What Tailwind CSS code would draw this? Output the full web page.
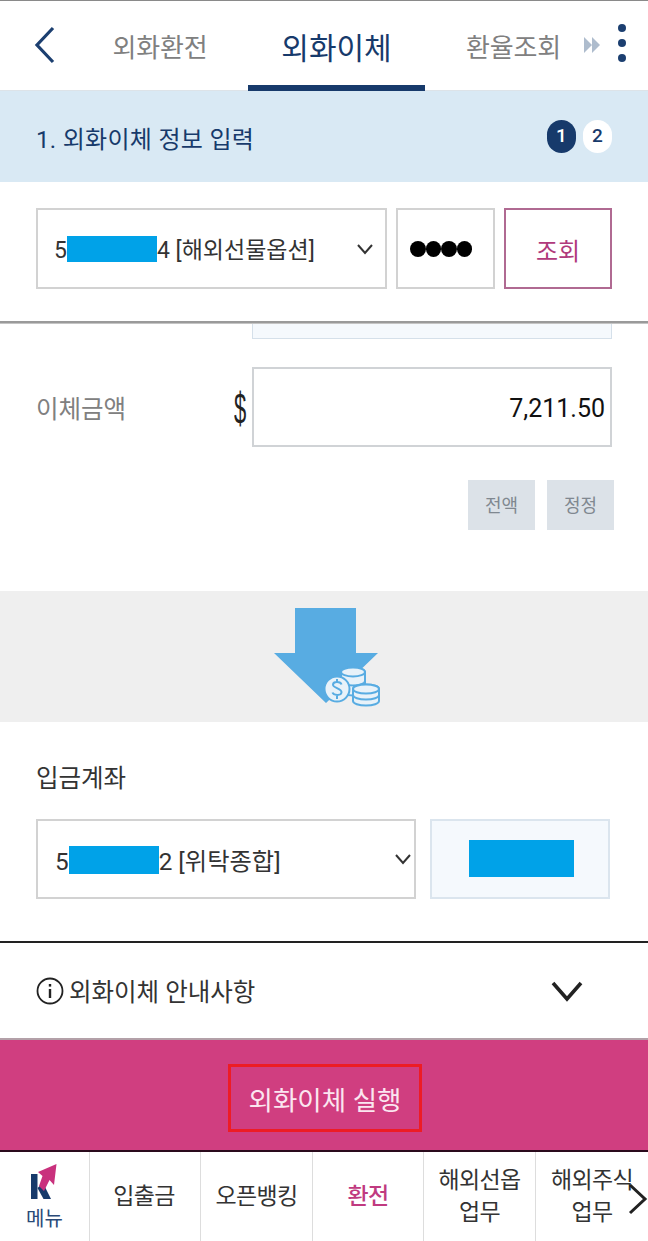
<!DOCTYPE html>
<html lang="ko">
<head>
<meta charset="UTF-8" />
<meta name="viewport" content="width=device-width, initial-scale=1.0" />
<title>외화이체</title>
<script src="https://cdn.jsdelivr.net/npm/@tailwindcss/browser@4"></script>
</head>
<body class="w-[648px] h-[1241px] overflow-hidden bg-white font-['Roboto','Noto_Sans_CJK_KR',sans-serif] text-[#222]">

<!-- Tabs -->
<header class="h-[91px] border-t border-t-[#8a8a8a] border-b border-b-[#dde3e8] flex items-stretch relative">
  <button class="w-[89px] flex items-center pl-[34px] pb-[2px]">
    <svg width="22" height="38" viewBox="0 0 22 38" fill="none" stroke="#1c3f70" stroke-width="3.2"><path d="M19 2 3 19l16 17"/></svg>
  </button>
  <div class="w-[159px] flex items-center justify-center pr-[17px] pt-[6px] text-[26px] text-[#808080] tracking-[-0.2px]">외화환전</div>
  <div class="w-[177px] flex items-center justify-center text-[30px] text-[#173a6b] border-b-[6px] border-b-[#173a6b] pt-[11px] -mb-[1px]">외화이체</div>
  <div class="flex-1 flex items-center pl-[41px] pt-[6px] text-[26px] text-[#808080] tracking-[-0.2px]">환율조회</div>
  <svg class="absolute left-[584px] top-[36px]" width="16" height="16" viewBox="0 0 16 16" fill="#aebccd"><path d="M0 0l8 8-8 8zM8 0l8 8-8 8z"/></svg>
  <div class="absolute left-[618px] top-[23px] flex flex-col gap-[7px]">
    <span class="block w-[8px] h-[8px] rounded-full bg-[#1c3f70]"></span>
    <span class="block w-[8px] h-[8px] rounded-full bg-[#1c3f70]"></span>
    <span class="block w-[8px] h-[8px] rounded-full bg-[#1c3f70]"></span>
  </div>
</header>

<!-- Step title -->
<section class="h-[91px] bg-[#d9e9f4] flex items-center justify-between pl-[36px] pr-[36px]">
  <div class="text-[24px] pt-[6px] text-[#173a6b] tracking-[0.3px]">1. 외화이체 정보 입력</div>
  <div class="flex gap-[7px] text-[19px] font-medium">
    <span class="w-[29px] h-[33px] rounded-full bg-[#173a6b] text-white flex items-center justify-center">1</span>
    <span class="w-[29px] h-[33px] rounded-full bg-white text-[#173a6b] flex items-center justify-center">2</span>
  </div>
</section>

<!-- Account lookup -->
<section class="h-[139px] flex items-start gap-[9px] px-[36px] pt-[26px]">
  <div class="w-[351px] h-[81px] border-2 border-[#d2d2d2] flex items-center justify-between pl-[16px] pr-[11px] text-[23px] text-[#333]">
    <div class="flex items-center"><span class="pt-[6px]">5</span><span class="w-[90px] h-[26px] bg-[#00a2e8]"></span><span class="pt-[6px]">4 [해외선물옵션]</span></div>
    <svg width="18" height="12" viewBox="0 0 18 12" fill="none" stroke="#333" stroke-width="2"><path d="M2 2l7 8 7-8"/></svg>
  </div>
  <div class="w-[99px] h-[81px] border-2 border-[#d2d2d2] flex items-center pl-[12px]">
    <span class="block w-[15.500px] h-[16px] rounded-full bg-black"></span>
    <span class="block w-[15.500px] h-[16px] rounded-full bg-black"></span>
    <span class="block w-[15.500px] h-[16px] rounded-full bg-black"></span>
    <span class="block w-[15.500px] h-[16px] rounded-full bg-black"></span>
  </div>
  <button class="w-[108px] h-[81px] border-2 border-[#b06a92] text-[#b03a7c] text-[24px] pt-[6px]">조회</button>
</section>

<!-- Scrolled form -->
<main class="relative">
  <div class="h-[3px] bg-[#9a9a9a] border-b border-b-[#c4c4c4]"></div>
  <div class="flex justify-end pr-[36px]">
    <div class="w-[360px] h-[15px] bg-[#f5f9fd] border border-t-0 border-[#d5e0ea]"></div>
  </div>
  <div class="flex items-center pl-[36px] pr-[36px] mt-[28px]">
    <div class="w-[182px] pt-[6px] text-[24.500px] text-[#808080]">이체금액</div>
    <div class="w-[34px] flex justify-center pl-[11px] pt-[4px]">
      <span class="inline-block text-[44px] leading-none font-['Liberation_Sans',sans-serif] text-[#222] scale-x-[0.5]">$</span>
    </div>
    <div class="w-[360px] h-[80px] border-2 border-[#d0d3d6] flex items-center justify-end pr-[5px] pt-[3px] text-[25px] text-[#111] ml-auto">7,211.50</div>
  </div>
  <div class="flex justify-end gap-[12px] pr-[34px] mt-[33px]">
    <button class="w-[67px] h-[50px] bg-[#dce2e8] text-[#808890] text-[18px]">전액</button>
    <button class="w-[67px] h-[50px] bg-[#dce2e8] text-[#808890] text-[18px]">정정</button>
  </div>
</main>

<!-- Arrow band -->
<section class="mt-[61px] h-[131px] bg-[#efefef] pl-[274px] pt-[17px]">
  <svg width="108" height="102" viewBox="0 0 108 102">
    <path d="M21 0H82V45H104L52 95 0 45H21Z" fill="#58ace2"/>
    <path d="M67 64a12 4.500 0 0 1 24 0V83a12 4.500 0 0 1-24 0Z" fill="#e8f2f9" stroke="#58ace2" stroke-width="2"/>
    <ellipse cx="79" cy="64" rx="12" ry="4.500" fill="#e8f2f9" stroke="#58ace2" stroke-width="2"/>
    <path d="M67 73a12 4.500 0 0 0 24 0" fill="none" stroke="#58ace2" stroke-width="2"/>
    <path d="M79 81a13 4.500 0 0 1 26 0V93a13 4.500 0 0 1-26 0Z" fill="#e8f2f9" stroke="#58ace2" stroke-width="2"/>
    <ellipse cx="92" cy="81" rx="13" ry="4.500" fill="#e8f2f9" stroke="#58ace2" stroke-width="2"/>
    <path d="M79 87a13 4.500 0 0 0 26 0" fill="none" stroke="#58ace2" stroke-width="2"/>
    <circle cx="63" cy="81" r="12.500" fill="#e8f2f9" stroke="#58ace2" stroke-width="2"/>
    <path d="M67.500 76.500c-1-3-8-3.500-8.500 0-.5 3.500 9 4 8.500 8-.5 3.500-8 3-9 0M63 71v3M63 88v3" fill="none" stroke="#58ace2" stroke-width="2"/>
  </svg>
</section>

<!-- Deposit account -->
<section class="px-[36px] pt-[42px] h-[221px] border-b-2 border-b-[#222]">
  <div class="text-[24.500px] leading-[30px] text-[#333]">입금계좌</div>
  <div class="flex gap-[14px] mt-[25px]">
    <div class="w-[380px] h-[80px] border-2 border-[#d2d2d2] flex items-center justify-between pl-[17px] pr-[2px] text-[24.300px] text-[#333]">
      <div class="flex items-center"><span class="pt-[6px]">5</span><span class="w-[90px] h-[28px] bg-[#00a2e8] mt-[2px]"></span><span class="pt-[6px]">2 [위탁종합]</span></div>
      <svg width="18" height="12" viewBox="0 0 18 12" fill="none" stroke="#333" stroke-width="2"><path d="M2 2l7 8 7-8"/></svg>
    </div>
    <div class="w-[180px] h-[80px] border-2 border-[#dbe5ee] bg-[#f5f9fd] flex items-center justify-center pl-[2px] pb-[2px]">
      <span class="block w-[105px] h-[37px] bg-[#00a2e8]"></span>
    </div>
  </div>
</section>

<!-- Notice -->
<section class="h-[95px] flex items-center justify-between pl-[36px] pr-[65px]">
  <div class="flex items-center gap-[5px] text-[24.500px] text-[#333]">
    <svg width="28" height="28" viewBox="0 0 28 28" fill="none" stroke="#222" stroke-width="1.800"><circle cx="14" cy="14" r="12.500"/><path d="M14 12v9" stroke-width="2.400"/><path d="M14 7v2.600" stroke-width="2.400"/></svg>
    <span class="pt-[5px]">외화이체 안내사항</span>
  </div>
  <svg width="32" height="22" viewBox="0 0 32 22" fill="none" stroke="#222" stroke-width="3.600"><path d="M2 3l14 16L30 3"/></svg>
</section>

<!-- Submit -->
<section class="h-[114px] bg-[#d03e80] border-t-2 border-t-[#b3a0a8] border-b-2 border-b-[#2a0a1c] flex items-center justify-center pt-[6px] pl-[2px]">
  <div class="w-[194px] h-[68px] border-[3px] border-[#ed1c24] flex items-center justify-center pt-[6px] text-[26.500px] text-[#fbe6f0]">외화이체 실행</div>
</section>

<!-- Bottom nav -->
<nav class="h-[89px] flex relative text-[23px] text-[#333] text-center leading-[32px] tracking-[-0.6px]">
  <div class="w-[90px] border-r border-r-[#ddd] flex flex-col items-center pt-[11px]">
    <svg width="36" height="36" viewBox="0 0 36 36">
      <path d="M4 11h6.500v25H4Z" fill="#173a6b"/>
      <path d="M10.500 25 16 20l8 16h-7.500Z" fill="#173a6b"/>
      <path d="M29.500 1 11 9l4.500 4L12 23l5 5 5.500-11 4.500 5Z" fill="#c9317d"/>
    </svg>
    <span class="text-[20px] leading-[24px] tracking-normal text-[#2a4a78] mt-[8px]">메뉴</span>
  </div>
  <div class="w-[111px] border-r border-r-[#ddd] flex items-center justify-center pr-[2px]">입출금</div>
  <div class="w-[112px] border-r border-r-[#ddd] flex items-center justify-center">오픈뱅킹</div>
  <div class="w-[111px] border-r border-r-[#ddd] flex items-center justify-center text-[#c03a80] font-medium">환전</div>
  <div class="w-[112px] border-r border-r-[#ddd] flex items-center justify-center">해외선옵<br />업무</div>
  <div class="w-[112px] flex items-center justify-center">해외주식<br />업무</div>
  <svg class="absolute left-[628px] top-[31px]" width="20" height="32" viewBox="0 0 20 32" fill="none" stroke="#222" stroke-width="3"><path d="M2 2l15 14L2 30"/></svg>
</nav>

</body>
</html>
